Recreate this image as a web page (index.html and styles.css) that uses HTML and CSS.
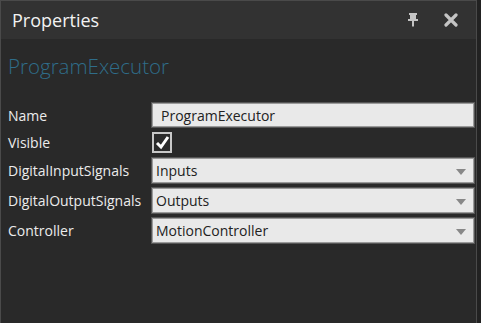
FILE: index.html
```html
<!DOCTYPE html>
<html lang="en">
<head>
    <meta charset="UTF-8">
    <meta name="viewport" content="width=device-width, initial-scale=1.0">
    <title>Properties</title>
    <link rel="stylesheet" href="styles.css">
</head>
<body>

<div class="panel">
    <header class="title-bar">
        <h1>Properties</h1>
        <div class="title-buttons">
            <svg class="pin-icon" width="12" height="14" viewBox="0 0 12 14">
                <path d="M2 0h8v2H9v4h2v2H7v5l-1 1-1-1V8H1V6h2V2H2z" fill="#c4c4c4"/>
            </svg>
            <svg class="close-icon" width="14" height="14" viewBox="0 0 14 14">
                <path d="M2 2l10 10M12 2L2 12" stroke="#c4c4c4" stroke-width="3.2" stroke-linecap="round"/>
            </svg>
        </div>
    </header>

    <div class="content">
        <h2 class="object-name">ProgramExecutor</h2>

        <div class="prop-grid">
            <label class="prop-label">Name</label>
            <div class="text-box">ProgramExecutor</div>

            <label class="prop-label">Visible</label>
            <div class="check-box">
                <svg width="15" height="15" viewBox="0 0 15 15">
                    <path d="M2 8l4 4 7-10" stroke="#fff" stroke-width="3" fill="none"/>
                </svg>
            </div>

            <label class="prop-label">DigitalInputSignals</label>
            <div class="combo-box">Inputs<span class="arrow"></span></div>

            <label class="prop-label">DigitalOutputSignals</label>
            <div class="combo-box">Outputs<span class="arrow"></span></div>

            <label class="prop-label">Controller</label>
            <div class="combo-box">MotionController<span class="arrow"></span></div>
        </div>
    </div>
</div>

</body>
</html>
```

FILE: styles.css
```css
body {
    margin: 0;
    padding: 0;
    background-color: #222;
    font-family: "Open Sans", "Noto Sans", sans-serif;
    color: #e6e6e6;
}

.panel {
    width: 475px;
    height: 322px;
    border: 1px solid #4a4a4a;
    border-bottom: none;
    background-color: #292929;
}

.title-bar {
    height: 38px;
    background-color: #323232;
    display: flex;
    align-items: center;
    padding: 0 0 0 11px;
}

.title-bar h1 {
    margin: 0;
    font-size: 18px;
    font-weight: normal;
    color: #f2f2f2;
}

.title-buttons {
    margin-left: auto;
    display: flex;
    align-items: center;
    gap: 25px;
    padding-right: 18px;
}

.content {
    padding: 13px 1px 0 7px;
}

.object-name {
    margin: 0 0 23px 0;
    font-size: 20.5px;
    font-weight: 300;
    color: #2f6d8a;
    line-height: 28px;
}

.prop-grid {
    display: grid;
    grid-template-columns: 143px 1fr;
    grid-template-rows: 24px 21px 25px 25px 25px;
    row-gap: 5px;
}

.prop-label {
    font-size: 14px;
    display: flex;
    align-items: center;
    color: #ececec;
}

.text-box,
.combo-box {
    background-color: #e9e9e9;
    border: 1px solid #9a9a9a;
    box-shadow: 0 0 0 1px #555;
    color: #222;
    font-size: 14px;
    display: flex;
    align-items: center;
    margin: 0 1px;
}

.text-box {
    padding-left: 8px;
}

.combo-box {
    padding-left: 3px;
    position: relative;
}

.arrow {
    position: absolute;
    right: 7px;
    top: 10px;
    width: 0;
    height: 0;
    border-left: 5px solid transparent;
    border-right: 5px solid transparent;
    border-top: 6px solid #888;
}

.check-box {
    width: 16px;
    height: 17px;
    margin-left: 1px;
    border: 2px solid #c8c8c8;
    background-color: #2b2b2b;
    display: flex;
    align-items: center;
    justify-content: center;
}
```
